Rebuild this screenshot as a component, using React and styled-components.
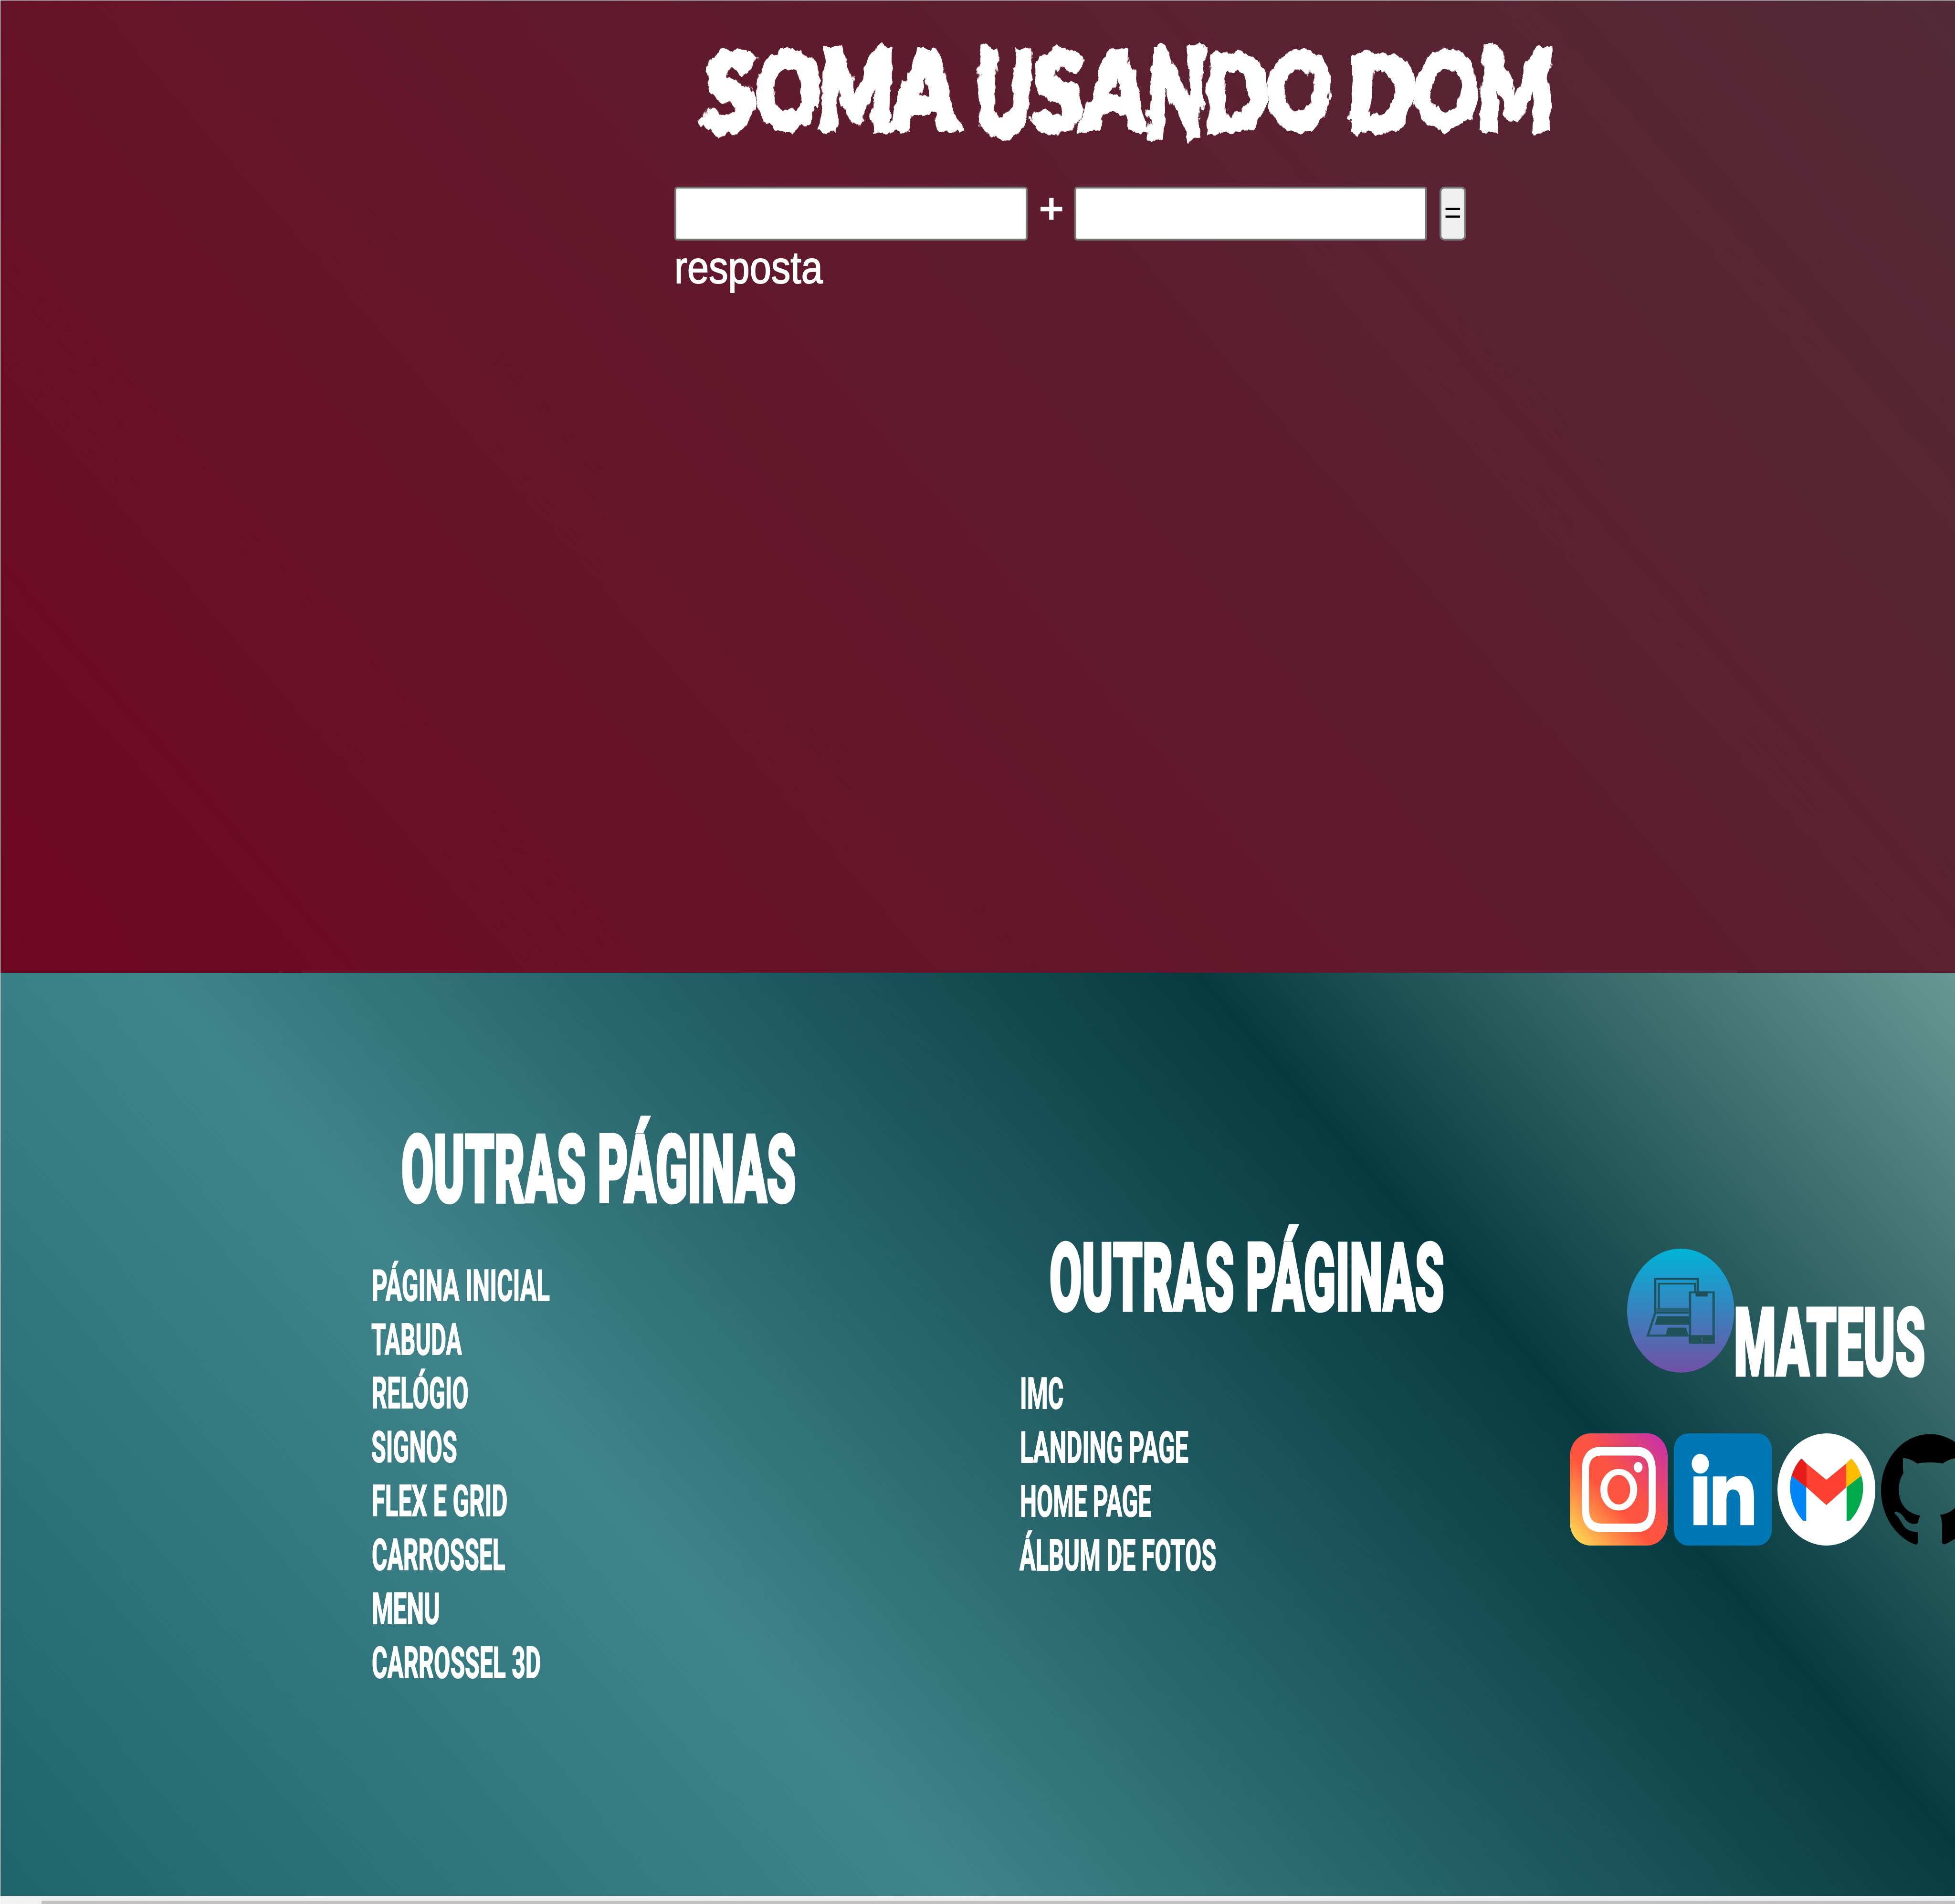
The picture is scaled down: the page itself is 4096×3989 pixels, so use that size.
import React, { useLayoutEffect, useRef, useState } from "react";
import styled, { createGlobalStyle } from "styled-components";

const SCALE = 0.95162;
const u = (n) => `${(n * SCALE).toFixed(2)}px`;

const GlobalStyle = createGlobalStyle`
  *, *::before, *::after { box-sizing: border-box; }
  html, body { margin: 0; padding: 0; overflow: hidden; background: #fff; }
  body { font-family: "Liberation Sans", Arial, sans-serif; color: #fff; }
`;

const Page = styled.div`
  width: 4096px;
  height: 3989px;
  display: flex;
  flex-direction: column;
  overflow: hidden;
  padding: 1px 0 0 1px;
`;

/* ---------- condensed text that fills a given width ---------- */

const FACES = {
  display: { family: '"Roboto", sans-serif', weight: 900, ratio: 0.711, shift: 0.0145, stroke: 7 },
  link: { family: '"Roboto", sans-serif', weight: 700, ratio: 0.711, shift: 0.0145, stroke: 2 },
  plain: { family: '"Liberation Sans", Arial, sans-serif', weight: 400, ratio: 0.688, shift: -0.003, stroke: 2 },
  brush: { family: '"Lato", sans-serif', weight: 900, ratio: 0.72, shift: -0.02, stroke: 17 },
};

const FitBox = styled.span`
  display: block;
  flex: none;
  width: ${(p) => u(p.$w)};
  height: ${(p) => u(p.$h)};
  margin-left: ${(p) => u(p.$indent || 0)};
  margin-top: ${(p) => u(p.$drop || 0)};
`;

const FitInner = styled.span`
  display: inline-block;
  vertical-align: top;
  white-space: pre;
  transform-origin: 0 0;
  font-family: ${(p) => FACES[p.$face].family};
  font-weight: ${(p) => FACES[p.$face].weight};
  font-size: ${(p) => u(p.$h / FACES[p.$face].ratio)};
  line-height: ${(p) => u(p.$h)};
  -webkit-text-stroke: ${(p) => u(FACES[p.$face].stroke)} currentColor;
`;

function FitText({ face, w, h, indent, drop, children }) {
  const ref = useRef(null);
  const [sx, setSx] = useState(1);
  useLayoutEffect(() => {
    setSx((w * SCALE) / ref.current.offsetWidth);
  }, [w, children]);
  const dy = (h / FACES[face].ratio) * FACES[face].shift * SCALE;
  return (
    <FitBox $w={w} $h={h} $indent={indent} $drop={drop}>
      <FitInner ref={ref} $face={face} $h={h} style={{ transform: `translateY(${dy}px) scaleX(${sx})` }}>
        {children}
      </FitInner>
    </FitBox>
  );
}

/* ---------- calculator ---------- */

const Main = styled.main`
  flex: none;
  height: ${u(2141)};
  padding: ${u(112)} 0 0 ${u(1484)};
  background: linear-gradient(48.96deg, #6f0822 0%, #522a37 100%);
`;

const Title = styled.h1`
  margin: 0 0 0 ${u(66)};
  height: ${u(172)};
  display: flex;
  gap: ${u(40)};
  filter: url(#brush);
`;

const BrushWord = styled.span`
  display: flex;
  align-items: flex-start;
  transform: skewX(-3deg);
`;

const Form = styled.form`
  margin-top: ${u(126)};
  display: flex;
  align-items: flex-start;
`;

const NumberInput = styled.input`
  width: ${u(777)};
  height: ${u(119)};
  padding: 0 ${u(8)};
  font-size: ${u(66)};
  color: #000;
  background: #fff;
  border: solid #767676;
  border-width: ${u(5)} ${u(4.3)};
  border-radius: ${u(6)};
  outline: none;
`;

const PlusSlot = styled.span`
  display: block;
  width: ${u(103)};
  height: ${u(119)};
  padding: ${u(24)} 0 0 ${u(26)};
`;

const SumButton = styled.button`
  margin-left: ${u(27)};
  width: ${u(59)};
  height: ${u(119)};
  padding: ${u(31)} 0 0;
  display: flex;
  justify-content: center;
  background: #efefef;
  border: solid #767676;
  border-width: ${u(5)} ${u(4.3)};
  border-radius: ${u(11)};
  color: #000;
`;

const Sign = styled.span`
  display: block;
  font-family: "Liberation Sans", Arial, sans-serif;
  font-size: ${(p) => u(p.$size)};
  line-height: ${(p) => u(p.$line)};
  -webkit-text-stroke: ${(p) => u(p.$stroke || 0)} currentColor;
`;

const Answer = styled.div`
  margin-top: ${u(26)};
`;

/* ---------- footer ---------- */

const Footer = styled.footer`
  flex: none;
  height: ${u(2032)};
  padding: ${u(357)} 0 0 ${u(821)};
  display: flex;
  align-items: flex-start;
  background: linear-gradient(48.96deg, #1f646a 0%, #40848b 34.5%, #063a40 72.5%, #679893 100%);
`;

const LinkColumn = styled.nav`
  flex: none;
  width: ${(p) => u(p.$width)};
  padding-top: ${(p) => u(p.$drop)};
`;

const Heading = styled.h2`
  margin: 0;
`;

const LinkList = styled.ul`
  list-style: none;
  margin: ${u(150)} 0 0;
  padding: 0;
  display: flex;
  flex-direction: column;
  gap: ${u(50.6)};
`;

const LinkItem = styled.li`
  height: ${u(68)};
`;

const Profile = styled.section`
  flex: none;
  padding-top: ${u(250)};
  display: flex;
  flex-direction: column;
`;

const NameRow = styled.div`
  margin-left: ${u(126)};
  height: ${u(278)};
  display: flex;
  align-items: flex-end;
`;

const Avatar = styled.svg`
  flex: none;
  display: block;
  width: ${u(236)};
  height: ${u(273)};
  margin-bottom: ${u(5)};
`;

const SocialRow = styled.div`
  margin-top: ${u(129)};
  display: flex;
  gap: ${u(12.7)};
`;

const SocialIcon = styled.svg`
  flex: none;
  display: block;
  width: ${u(215.6)};
  height: ${u(247)};
`;

/* ---------- scrollbar ---------- */

const ScrollTrack = styled.div`
  flex: 1;
  background: #f1f1f1;
  padding: ${u(10)} 0 0 ${u(90)};
`;

const ScrollThumb = styled.div`
  height: 100%;
  background: #c1c1c1;
`;

/* letter, width, height, offset from the line top */
const TITLE_WORDS = [
  [["S", 112, 170, 3], ["O", 141, 160, 4], ["M", 162, 172, -4], ["A", 142, 168, 2]],
  [["U", 126, 184, 0], ["S", 114, 170, 3], ["A", 138, 166, 2], ["N", 128, 190, -4], ["D", 138, 162, 10], ["O", 138, 160, 4]],
  [["D", 146, 162, 10], ["O", 139, 160, 4], ["M", 165, 172, -4]],
];

const FIRST_LINKS = [
  ["PÁGINA INICIAL", 392, -3],
  ["TABUDA", 199, -5],
  ["RELÓGIO", 213, -3],
  ["SIGNOS", 189, -5],
  ["FLEX E GRID", 299, -3],
  ["CARROSSEL", 294, -3],
  ["MENU", 150, -3],
  ["CARROSSEL 3D", 372, -3],
];

const SECOND_LINKS = [
  ["IMC", 96, -3],
  ["LANDING PAGE", 371, -3],
  ["HOME PAGE", 289, -3],
  ["ÁLBUM DE FOTOS", 433, -4],
];

function Links({ items, width, drop }) {
  return (
    <LinkColumn $width={width} $drop={drop}>
      <Heading>
        <FitText face="display" w={869} h={147} indent={62}>OUTRAS PÁGINAS</FitText>
      </Heading>
      <LinkList>
        {items.map(([label, w, indent]) => (
          <LinkItem key={label}>
            <FitText face="link" w={w} h={68} indent={indent}>{label}</FitText>
          </LinkItem>
        ))}
      </LinkList>
    </LinkColumn>
  );
}

function DevicesLogo() {
  return (
    <Avatar viewBox="0 0 409 562" preserveAspectRatio="none">
      <defs>
        <linearGradient id="devices" x1="0" y1="0" x2="0" y2="1">
          <stop offset="0" stopColor="#00b4d8" />
          <stop offset="1" stopColor="#7150a4" />
        </linearGradient>
      </defs>
      <ellipse cx="204.5" cy="281" rx="204.5" ry="281" fill="url(#devices)" />
      <g fill="none" stroke="#1f5663" strokeWidth="9">
        <path d="M107 292V137H270V194" />
        <path d="M121 272V159H259V194" strokeWidth="8" />
        <path d="M107 290H236M107 292L79 394H236" />
        <path d="M240 198H330V426H240Z" />
      </g>
      <g fill="#1f5258">
        <path d="M112 268H236V285H112Z" opacity="0.65" />
        <path d="M115 306H236V345H106Z" />
        <path d="M155 358H225L233 391H147Z" />
        <path d="M260 194H308V217H262Z" />
        <path d="M236 392H334V430H236Z" />
      </g>
      <path d="M286 402V420" stroke="#3d5d80" strokeWidth="5" />
    </Avatar>
  );
}

function Instagram() {
  return (
    <SocialIcon viewBox="0 0 374 510" preserveAspectRatio="none">
      <defs>
        <linearGradient id="instaFill" x1="0" y1="1" x2="1" y2="0">
          <stop offset="0.04" stopColor="#ffdb55" />
          <stop offset="0.42" stopColor="#ff543e" />
          <stop offset="0.56" stopColor="#fb5344" />
          <stop offset="0.97" stopColor="#c630ac" />
        </linearGradient>
      </defs>
      <rect width="374" height="510" rx="78" ry="106" fill="url(#instaFill)" />
      <path
        fill="#fff"
        fillRule="evenodd"
        d="M121 61H253C302 61 328 98 328 165V345C328 412 302 449 253 449H121C72 449 46 412 46 345V165C46 98 72 61 121 61ZM124 101C88 101 73 122 73 170V340C73 388 88 410 124 410H250C286 410 301 388 301 340V170C301 122 286 101 250 101Z"
      />
      <ellipse cx="187" cy="256" rx="57" ry="81" fill="none" stroke="#fff" strokeWidth="27" />
      <ellipse cx="261" cy="154" rx="17" ry="24" fill="#fff" />
    </SocialIcon>
  );
}

function LinkedIn() {
  return (
    <SocialIcon viewBox="0 0 374 510" preserveAspectRatio="none">
      <rect width="374" height="510" rx="54" ry="72" fill="#0077b5" />
      <g fill="#fff">
        <ellipse cx="101" cy="138" rx="33" ry="45" />
        <path d="M75 196H128V417H75Z" />
        <path d="M149 196H201V225C211 204 229 193 251 193C291 193 306 232 306 292V417H254V309C254 275 245 255 226 255C208 255 201 276 201 309V417H149Z" />
      </g>
    </SocialIcon>
  );
}

function Gmail() {
  return (
    <SocialIcon viewBox="0 0 374 510" preserveAspectRatio="none">
      <ellipse cx="187" cy="255" rx="187" ry="255" fill="#fff" />
      <path d="M54 192L110 244V397H98C60 350 36 265 54 192Z" fill="#0085f7" />
      <path d="M320 192L264 244V397H276C316 350 340 265 320 192Z" fill="#00a94b" />
      <path d="M110 136L187 211L264 136V244L187 326L110 244Z" fill="#ff4131" />
      <path d="M54 192C64 158 76 132 92 114L111 138V246Z" fill="#e51c19" />
      <path d="M320 192C310 158 298 132 282 114L262 138V246Z" fill="#ffbc00" />
    </SocialIcon>
  );
}

function GitHub() {
  return (
    <SocialIcon viewBox="0 0 374 510" preserveAspectRatio="none">
      <path
        fill="#000"
        d="M187 3C84 3 0 118 0 258C0 371 54 470 130 505C138 507 141 500 141 490V449C95 447 84 418 74 396C66 380 60 372 53 366C49 358 56 353 65 359C83 366 90 388 98 398C113 414 130 413 141 408C142 394 146 384 150 374C108 365 68 334 68 254C68 224 75 200 86 180C82 162 84 140 84 113C102 112 120 122 138 137C170 130 204 130 236 137C254 122 272 112 290 113C290 140 292 162 288 180C299 200 306 224 306 254C306 334 265 365 226 370C230 382 233 400 233 420V490C233 500 236 507 246 503C321 466 374 371 374 258C374 118 290 3 187 3Z"
      />
    </SocialIcon>
  );
}

const FilterDefs = styled.svg`
  position: absolute;
  width: 0;
  height: 0;
`;

export default function App() {
  return (
    <>
      <GlobalStyle />
      <FilterDefs aria-hidden="true">
        <filter id="brush" x="-3%" y="-20%" width="106%" height="140%">
          <feTurbulence type="fractalNoise" baseFrequency="0.045 0.022" numOctaves="4" seed="4" result="noise" />
          <feDisplacementMap in="SourceGraphic" in2="noise" scale="26" xChannelSelector="R" yChannelSelector="G" />
        </filter>
      </FilterDefs>
      <Page>
        <Main>
          <Title>
            {TITLE_WORDS.map((letters, i) => (
              <BrushWord key={i}>
                {letters.map(([ch, w, h, drop], j) => (
                  <FitText key={j} face="brush" w={w} h={h} drop={drop}>{ch}</FitText>
                ))}
              </BrushWord>
            ))}
          </Title>
          <Form onSubmit={(e) => e.preventDefault()}>
            <NumberInput />
            <PlusSlot><Sign $size={92} $line={50} $stroke={3}>+</Sign></PlusSlot>
            <NumberInput />
            <SumButton><Sign $size={66} $line={44}>=</Sign></SumButton>
          </Form>
          <Answer><FitText face="plain" w={327} h={68}>resposta</FitText></Answer>
        </Main>
        <Footer>
          <Links items={FIRST_LINKS} width={1427} drop={0} />
          <Links items={SECOND_LINKS} width={1207.5} drop={238} />
          <Profile>
            <NameRow>
              <DevicesLogo />
              <FitText face="display" w={421} h={147} indent={-1}>MATEUS</FitText>
            </NameRow>
            <SocialRow>
              <Instagram />
              <LinkedIn />
              <Gmail />
              <GitHub />
            </SocialRow>
          </Profile>
        </Footer>
        <ScrollTrack><ScrollThumb /></ScrollTrack>
      </Page>
    </>
  );
}
